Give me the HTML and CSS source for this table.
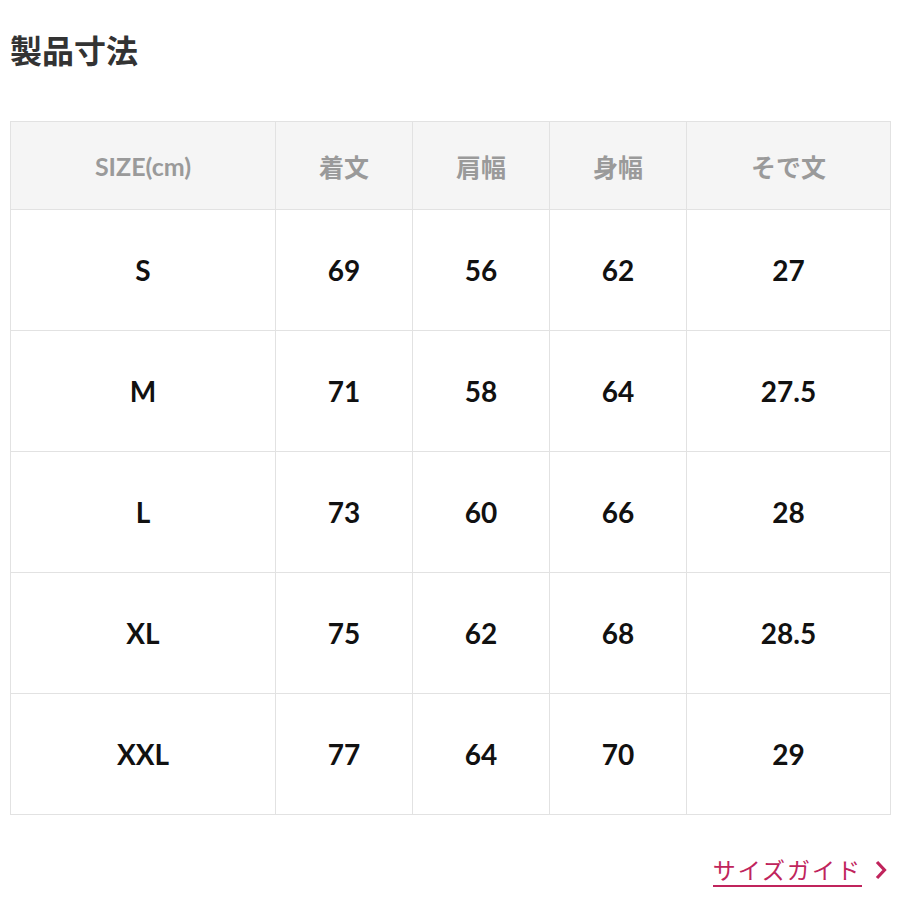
FILE: index.html
```html
<!DOCTYPE html>
<html lang="ja">
<head>
<meta charset="utf-8">
<link rel="stylesheet" href="styles.css">
</head>
<body>
<div class="page">
  <h2 class="title">製品寸法</h2>
  <table class="sizes">
    <thead>
      <tr><th>SIZE(cm)</th><th>着文</th><th>肩幅</th><th>身幅</th><th>そで文</th></tr>
    </thead>
    <tbody>
      <tr><td>S</td><td>69</td><td>56</td><td>62</td><td>27</td></tr>
      <tr><td>M</td><td>71</td><td>58</td><td>64</td><td>27.5</td></tr>
      <tr><td>L</td><td>73</td><td>60</td><td>66</td><td>28</td></tr>
      <tr><td>XL</td><td>75</td><td>62</td><td>68</td><td>28.5</td></tr>
      <tr><td>XXL</td><td>77</td><td>64</td><td>70</td><td>29</td></tr>
    </tbody>
  </table>
  <div class="guide">
    <a class="guide-link" href="#">サイズガイド</a>
    <svg class="chev" width="14" height="22" viewBox="0 0 14 22"><path d="M3 3 L10.5 11 L3 19" fill="none" stroke="#c0245c" stroke-width="3.2"/></svg>
  </div>
</div>
</body>
</html>
```
FILE: styles.css
```css
html, body { margin: 0; padding: 0; background: #fff; }
body { font-family: Lato, "Noto Sans CJK JP", sans-serif; }
.page { padding: 0 10px; }
.title {
  margin: 0;
  padding-top: 31px;
  height: 121px;
  box-sizing: border-box;
  font-family: "Noto Sans CJK JP", sans-serif;
  font-weight: 700;
  font-size: 32px;
  line-height: 36px;
  color: #333;
}
.sizes {
  width: 881px;
  border-collapse: collapse;
  table-layout: fixed;
}
.sizes th, .sizes td {
  border: 1px solid #e2e2e2;
  text-align: center;
  vertical-align: middle;
  padding: 0;
}
.sizes th:nth-child(1) { width: 264px; }
.sizes th:nth-child(2), .sizes th:nth-child(3), .sizes th:nth-child(4) { width: 136px; }
.sizes thead th {
  background: #f5f5f5;
  height: 87px;
  color: #9a9a9a;
  font-size: 25px;
  font-weight: 700;
  font-family: Lato, "Noto Sans CJK JP", sans-serif;
}
.sizes td {
  height: 120px;
  font-size: 28px;
  font-weight: 700;
  color: #111;
}
.guide {
  display: flex;
  justify-content: flex-end;
  align-items: center;
  gap: 12px;
  margin-top: 38px;
  padding-right: 2px;
}
.guide-link {
  font-family: "Noto Sans CJK JP", sans-serif;
  font-size: 23px;
  color: #c0245c;
  text-decoration: none;
  border-bottom: 2px solid #c0245c;
  line-height: 32px;
  letter-spacing: 2px;
}
.chev { display: block; }
```
